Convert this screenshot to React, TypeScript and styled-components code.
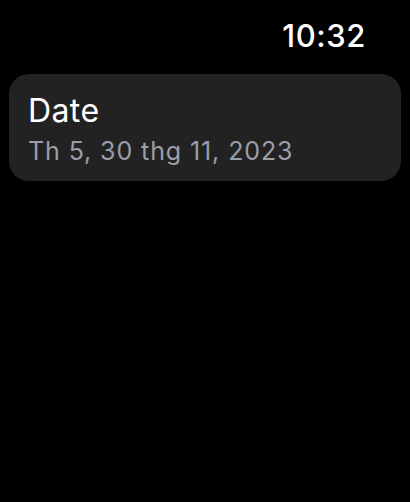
import React from "react";
import styled, { createGlobalStyle } from "styled-components";

const Global = createGlobalStyle`
  html, body { margin: 0; padding: 0; background: #000; }
  body { font-family: Inter, "Noto Sans", sans-serif; }
`;

const Screen = styled.div`
  width: 410px;
  height: 502px;
  background: #000;
  display: flex;
  flex-direction: column;
  padding: 0 9px;
  box-sizing: border-box;
`;

const StatusBar = styled.div`
  display: flex;
  justify-content: flex-end;
  align-items: center;
  height: 74px;
  padding-right: 35px;
  box-sizing: border-box;
`;

const Time = styled.div`
  color: #fff;
  font-size: 31px;
  font-weight: 500;
  letter-spacing: 0.6px;
  margin-top: -3px;
`;

const Card = styled.div`
  background: #222222;
  border-radius: 20px;
  height: 107px;
  padding: 19px 20px 0 19px;
  box-sizing: border-box;
  display: flex;
  flex-direction: column;
`;

const Title = styled.div`
  color: #fff;
  font-size: 32px;
  line-height: 36px;
  font-weight: 400;
  letter-spacing: 0.4px;
`;

const Subtitle = styled.div`
  color: #9a9ea6;
  font-size: 25px;
  line-height: 30px;
  font-weight: 400;
  letter-spacing: 0.9px;
  margin-top: 7px;
`;

export default function App() {
  return (
    <>
      <Global />
      <Screen>
        <StatusBar>
          <Time>10:32</Time>
        </StatusBar>
        <Card>
          <Title>Date</Title>
          <Subtitle>Th 5, 30 thg 11, 2023</Subtitle>
        </Card>
      </Screen>
    </>
  );
}
